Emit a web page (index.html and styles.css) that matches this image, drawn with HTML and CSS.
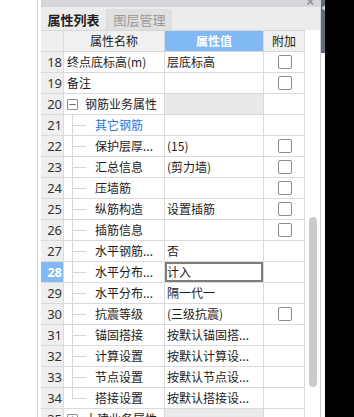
FILE: index.html
```html
<!DOCTYPE html>
<html lang="zh">
<head>
<meta charset="utf-8">
<title>属性列表</title>
<link rel="stylesheet" href="styles.css">
</head>
<body>
<div class="screen">
  <div class="gutter"></div>
  <div class="panel">
    <div class="titlebar">
      <svg class="close" width="7" height="6" viewBox="0 0 7 6"><path d="M0.5 -1 L6 4.5 M6 -1 L0.5 4.5" stroke="#8a8a8a" stroke-width="1.3" fill="none"/></svg>
    </div>
    <div class="tabs">
      <div class="tab active">属性列表</div>
      <div class="tab">图层管理</div>
    </div>
    <div class="body">
      <div class="grid">
        <div class="row head">
          <div class="c n"></div>
          <div class="c k center">属性名称</div>
          <div class="c v center sel">属性值</div>
          <div class="c a center">附加</div>
        </div>
        <div class="row"><div class="c n">18</div><div class="c k">终点底标高(m)</div><div class="c v">层底标高</div><div class="c a"><span class="cb"></span></div></div>
        <div class="row"><div class="c n">19</div><div class="c k">备注</div><div class="c v"></div><div class="c a"><span class="cb"></span></div></div>
        <div class="row"><div class="c n">20</div><div class="c k"><span class="exp">−</span>钢筋业务属性</div><div class="c v grp"></div><div class="c a"></div></div>
        <div class="row"><div class="c n">21</div><div class="c k"><span class="tree"></span><span class="link">其它钢筋</span></div><div class="c v"></div><div class="c a"></div></div>
        <div class="row"><div class="c n">22</div><div class="c k"><span class="tree"></span>保护层厚...</div><div class="c v">(15)</div><div class="c a"><span class="cb"></span></div></div>
        <div class="row"><div class="c n">23</div><div class="c k"><span class="tree"></span>汇总信息</div><div class="c v">(剪力墙)</div><div class="c a"><span class="cb"></span></div></div>
        <div class="row"><div class="c n">24</div><div class="c k"><span class="tree"></span>压墙筋</div><div class="c v"></div><div class="c a"><span class="cb"></span></div></div>
        <div class="row"><div class="c n">25</div><div class="c k"><span class="tree"></span>纵筋构造</div><div class="c v">设置插筋</div><div class="c a"><span class="cb"></span></div></div>
        <div class="row"><div class="c n">26</div><div class="c k"><span class="tree"></span>插筋信息</div><div class="c v"></div><div class="c a"><span class="cb"></span></div></div>
        <div class="row"><div class="c n">27</div><div class="c k"><span class="tree"></span>水平钢筋...</div><div class="c v">否</div><div class="c a"></div></div>
        <div class="row"><div class="c n cur">28</div><div class="c k"><span class="tree"></span>水平分布...</div><div class="c v edit">计入</div><div class="c a"></div></div>
        <div class="row"><div class="c n">29</div><div class="c k"><span class="tree"></span>水平分布...</div><div class="c v">隔一代一</div><div class="c a"></div></div>
        <div class="row"><div class="c n">30</div><div class="c k"><span class="tree"></span>抗震等级</div><div class="c v">(三级抗震)</div><div class="c a"><span class="cb"></span></div></div>
        <div class="row"><div class="c n">31</div><div class="c k"><span class="tree"></span>锚固搭接</div><div class="c v">按默认锚固搭...</div><div class="c a"></div></div>
        <div class="row"><div class="c n">32</div><div class="c k"><span class="tree"></span>计算设置</div><div class="c v">按默认计算设...</div><div class="c a"></div></div>
        <div class="row"><div class="c n">33</div><div class="c k"><span class="tree"></span>节点设置</div><div class="c v">按默认节点设...</div><div class="c a"></div></div>
        <div class="row"><div class="c n">34</div><div class="c k"><span class="tree last"></span>搭接设置</div><div class="c v">按默认搭接设...</div><div class="c a"></div></div>
        <div class="row"><div class="c n">35</div><div class="c k"><span class="exp">+</span>土建业务属性</div><div class="c v grp"></div><div class="c a"></div></div>
      </div>
      <div class="scroll"><div class="thumb"></div></div>
    </div>
  </div>
  <div class="dock">
    <div class="dock-bar">
      <svg width="4" height="8" viewBox="0 0 4 8"><path d="M4 1 L0.5 4 L4 7 Z" fill="#c9d0d6"/></svg>
    </div>
  </div>
  <div class="black"></div>
</div>
</body>
</html>
```

FILE: styles.css
```css
html, body {
  margin: 0;
  padding: 0;
  background: #ffffff;
}

.screen {
  display: flex;
  width: 354px;
  height: 417px;
  overflow: hidden;
  font-family: "Noto Sans CJK SC", "Noto Sans", sans-serif;
  font-size: 12px;
  color: #1c1c1c;
}

.gutter {
  width: 37px;
  flex: none;
  border-right: 1px solid #cacaca;
  margin-right: 3px;
  background: #ffffff;
}

.panel {
  width: 279px;
  flex: none;
  border-right: 1px solid #d0d0d0;
  display: flex;
  flex-direction: column;
  background: #ffffff;
}

.titlebar {
  height: 7px;
  flex: none;
  background: #d6d6da;
  display: flex;
  justify-content: flex-end;
  align-items: flex-start;
  padding-right: 6px;
}

.close {
  display: block;
}

.tabs {
  height: 23px;
  flex: none;
  background: #ececec;
  display: flex;
  align-items: flex-end;
}

.tab {
  width: 65px;
  height: 21px;
  line-height: 21px;
  text-align: center;
  font-size: 13px;
  color: #9a9a9a;
  background: #e0e0e0;
  border-left: 1px solid #d6d6d6;
}

.tab.active {
  color: #222222;
  background: #ececec;
  border-left: none;
  font-weight: bold;
}

.body {
  flex: 1;
  display: flex;
  overflow: hidden;
}

.grid {
  width: 264px;
  flex: none;
  display: flex;
  flex-direction: column;
}

.row {
  display: flex;
  height: 20px;
  flex: none;
  border-bottom: 1px solid #dadada;
}

.row.head {
  border-top: 1px solid #d6d6d6;
  background: #f0f0f0;
}

.c {
  height: 20px;
  line-height: 20px;
  border-right: 1px solid #dadada;
  white-space: nowrap;
  overflow: hidden;
  display: flex;
  align-items: center;
}

.n {
  width: 22px;
  background: #efefef;
  justify-content: flex-end;
  padding: 0;
  font-size: 13px;
  color: #333333;
  font-family: "Noto Sans", "Noto Sans CJK SC", sans-serif;
}

.n > * { }

.row .n {
  padding-right: 1px;
  width: 21px;
}

.n.cur {
  background: #80b9f4;
  color: #ffffff;
  font-weight: bold;
}

.k {
  width: 97px;
  padding-left: 3px;
}

.v {
  width: 96px;
  padding-left: 2px;
}

.a {
  width: 40px;
  justify-content: center;
}

.center {
  justify-content: center;
  padding-left: 0;
}

.head .k { width: 100px; }
.head .v { width: 98px; }

.sel {
  background: #80b9f4;
  color: #ffffff;
  font-weight: bold;
}

.grp {
  background: #e9e9e9;
}

.edit {
  box-shadow: inset 0 0 0 2px #7d7d7d;
}

.cb {
  width: 12px;
  height: 12px;
  border: 1px solid #8c8c8c;
  border-radius: 2px;
  background: #ffffff;
  margin-left: 1px;
}

.exp {
  width: 9px;
  height: 9px;
  border: 1px solid #8e8e8e;
  border-radius: 1px;
  margin-right: 7px;
  line-height: 9px;
  font-size: 10px;
  text-align: center;
  color: #555555;
  font-family: "DejaVu Sans", sans-serif;
  flex: none;
  display: flex;
  align-items: center;
  justify-content: center;
}

.tree {
  width: 23px;
  height: 21px;
  flex: none;
  margin-left: 5px;
  align-self: flex-start;
  background:
    linear-gradient(#d6d6d6, #d6d6d6) 0 0 / 1px 100% no-repeat,
    linear-gradient(#d6d6d6, #d6d6d6) 0 10px / 14px 1px no-repeat;
}

.tree.last {
  background:
    linear-gradient(#d6d6d6, #d6d6d6) 0 0 / 1px 11px no-repeat,
    linear-gradient(#d6d6d6, #d6d6d6) 0 10px / 14px 1px no-repeat;
}

.link {
  color: #2f72dc;
}

.scroll {
  width: 15px;
  flex: none;
  display: flex;
  justify-content: center;
  padding-top: 187px;
}

.thumb {
  width: 8px;
  height: 170px;
  border-radius: 4px;
  background: #cbcbcb;
}

.dock {
  width: 4px;
  flex: none;
  background: #ffffff;
}

.dock-bar {
  height: 53px;
  background: #5f6b76;
  display: flex;
  justify-content: center;
  padding-top: 4px;
  box-sizing: border-box;
}

.dock-bar svg {
  display: block;
}

.black {
  flex: 1;
  background: #000000;
}
```
